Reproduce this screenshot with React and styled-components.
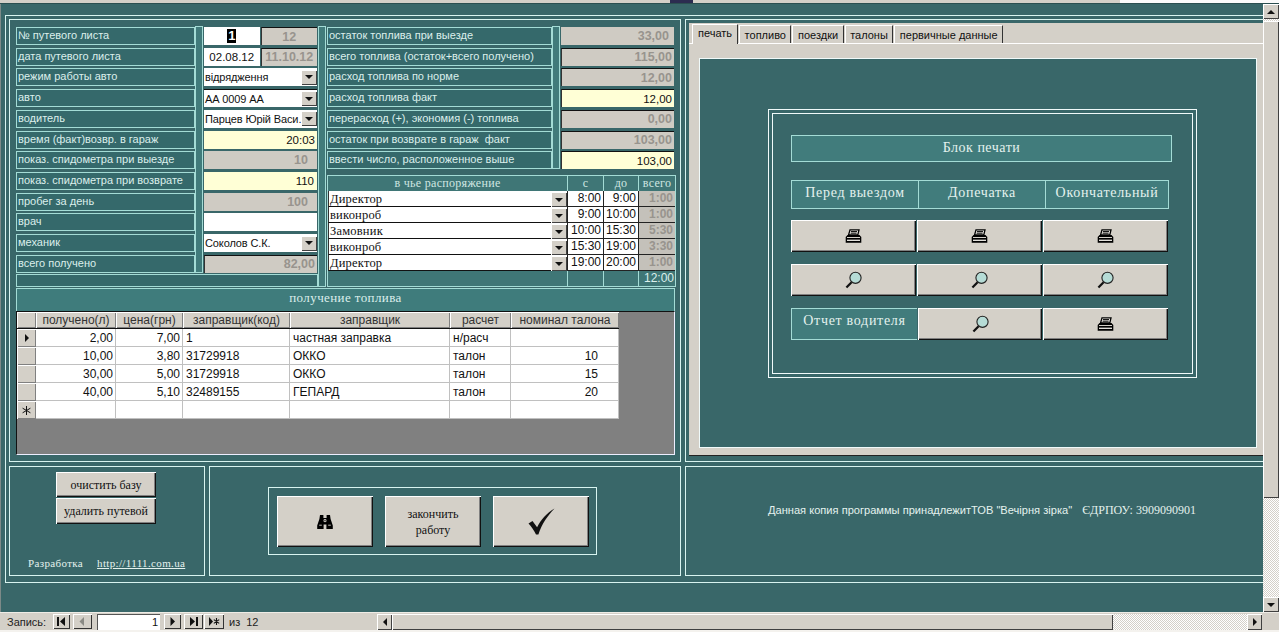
import React from 'react';
import styled, { createGlobalStyle } from 'styled-components';

const GlobalStyle = createGlobalStyle`
    html, body { margin: 0; padding: 0; background: #396769; }
    * { box-sizing: border-box; }
`;

const sans = '"Liberation Sans", Arial, sans-serif';
const serif = '"Liberation Serif", "Times New Roman", serif';
const FACE = '#d4d0c8';
const LINE = '#d8f4f0';
const SOFT = '#a4dcd6';

const Page = styled.div`
    width: 1279px;
    height: 632px;
    overflow: hidden;
    display: flex;
    flex-direction: column;
    background: #396769;
    font-family: ${sans};
`;

const TopStrip = styled.div`
    height: 4px;
    flex: none;
    display: grid;
    grid-template-columns: 670px 23px 427px 1fr;
    border-bottom: 1px solid #2b4f50;
`;

const StripPiece = styled.div`
    background: ${(p) => p.$color};
`;

const Middle = styled.div`
    flex: 1;
    min-height: 0;
    display: flex;
`;

const Content = styled.div`
    width: 1263px;
    border-left: 1px solid #7d8a88;
    padding: 11px 0 0 4px;
`;

const OuterFrame = styled.div`
    height: 568px;
    border: 1px solid ${LINE};
    border-right: none;
    padding: 3px 0 4px 3px;
    display: flex;
    flex-direction: column;
    gap: 4px;
`;

const PanelRow = styled.div`
    display: flex;
    gap: 4px;
    height: ${(p) => p.$height}px;
    flex: none;
`;

const Panel = styled.div`
    width: ${(p) => (p.$width ? `${p.$width}px` : 'auto')};
    flex: ${(p) => (p.$width ? 'none' : '1')};
    min-width: 0;
    border: 1px solid ${LINE};
    border-right: ${(p) => (p.$open ? 'none' : `1px solid ${LINE}`)};
`;

const FormPanel = styled(Panel)`
    padding: 6px 5px 0 6px;
`;

const FormArea = styled.div`
    height: 261px;
    display: flex;
`;

const LeftBlock = styled.div`
    width: 302px;
    flex: none;
    display: flex;
    flex-direction: column;
`;

const BlockColumns = styled.div`
    display: flex;
`;

const RowStack = styled.div`
    width: ${(p) => p.$width}px;
    flex: none;
    display: flex;
    flex-direction: column;
    gap: 2.72px;
    padding-top: 1px;
`;

const Label = styled.div`
    height: 18px;
    border: 1px solid ${SOFT};
    background: #35696b;
    color: #dcefec;
    font-size: 11px;
    line-height: 15px;
    padding-left: 1px;
    white-space: pre;
    overflow: hidden;
`;

const Gutter = styled.div`
    width: ${(p) => p.$width || 8}px;
    flex: none;
    border: 1px solid ${SOFT};
    background: #417b7b;
    margin-right: 1px;
`;

const Strip = styled.div`
    height: 13px;
    margin-top: 1px;
    border: 1px solid ${SOFT};
    background: #35696b;
`;

const fieldTones = { white: '#ffffff', gray: '#cfcbc3', yellow: '#ffffd6' };

const Field = styled.div`
    height: 18px;
    flex: ${(p) => (p.$half ? 1 : 'none')};
    display: flex;
    align-items: center;
    justify-content: ${(p) => (p.$center ? 'center' : 'flex-end')};
    padding: 0 ${(p) => p.$pad || 2}px 0 2px;
    background: ${(p) => fieldTones[p.$tone || 'white']};
    color: ${(p) => (p.$tone === 'gray' ? '#98948e' : '#111')};
    font-size: ${(p) => (p.$tone === 'gray' ? 12.5 : 11.5)}px;
    font-weight: ${(p) => (p.$tone === 'gray' ? 'bold' : 'normal')};
    white-space: nowrap;
    border-top: ${(p) => (p.$sunken ? '1px solid #111' : 'none')};
    border-left: ${(p) => (p.$sunken ? '1px solid #333' : 'none')};
`;

const FieldPair = styled.div`
    display: flex;
    gap: 1px;
    height: 18px;
`;

const Selected = styled.span`
    background: #000;
    color: #fff;
    font-weight: bold;
    font-size: 13px;
    padding: 0 1px;
    line-height: 14px;
`;

const Combo = styled.div`
    height: 18px;
    display: flex;
    align-items: center;
    background: #fff;
    font-size: 11px;
    letter-spacing: -0.12px;
    color: #111;
    padding-left: 1px;
    border-top: ${(p) => (p.$sunken ? '1px solid #111' : 'none')};
    white-space: nowrap;
`;

const ComboText = styled.span`
    flex: 1;
    min-width: 0;
`;

const ComboButton = styled.span`
    width: 16px;
    height: 15px;
    flex: none;
    display: flex;
    align-items: center;
    justify-content: center;
    background: ${FACE};
    box-shadow: inset 1px 1px 0 #fff, inset -1px -1px 0 #404040;
`;

const RightBlock = styled.div`
    width: 349px;
    flex: none;
    display: flex;
    flex-direction: column;
    gap: 6px;
`;

const TripGrid = styled.div`
    display: grid;
    grid-template-columns: 239px 36px 35px 37px;
    grid-template-rows: 15px repeat(5, 16px) 15px;
    border: 1px solid ${SOFT};
    width: 349px;
    background: #3f7676;
`;

const TripHead = styled.div`
    font-family: ${serif};
    font-size: 12px;
    letter-spacing: 0.3px;
    color: #cfe6e2;
    text-align: center;
    line-height: 15px;
    border-left: ${(p) => (p.$first ? 'none' : `1px solid ${SOFT}`)};
`;

const TripCombo = styled.div`
    display: flex;
    background: #fff;
    border-bottom: 1px solid #111;
    border-left: 1px solid #333;
    font-family: ${serif};
    font-size: 12.5px;
    letter-spacing: 0.2px;
    color: #111;
    line-height: 14px;
    padding: 1px 0 0 1px;
`;

const TripTime = styled.div`
    background: ${(p) => (p.$gray ? '#c4c1ba' : '#fff')};
    color: ${(p) => (p.$gray ? '#98948e' : '#111')};
    font-weight: ${(p) => (p.$gray ? 'bold' : 'normal')};
    font-size: 12px;
    line-height: 15px;
    text-align: right;
    padding-right: 2px;
    border-left: 1px solid #222;
    border-bottom: 1px solid #222;
`;

const TripFoot = styled.div`
    border-left: ${(p) => (p.$first ? 'none' : `1px solid ${SOFT}`)};
    font-size: 12px;
    line-height: 14px;
    text-align: right;
    color: #dcefec;
    padding-right: 1px;
`;

const FuelHead = styled.div`
    margin-top: 1px;
    height: 23px;
    background: #3f7c7c;
    border: 1px solid ${SOFT};
    border-bottom: none;
    text-align: center;
    font-family: ${serif};
    font-size: 13px;
    letter-spacing: 0.4px;
    line-height: 18px;
    color: #dcefec;
`;

const Sheet = styled.div`
    height: 144px;
    background: #808080;
    border-top: 1px solid #111;
    border-left: 1px solid #111;
    border-bottom: 1px solid #eef;
    border-right: 1px solid #eef;
`;

const SheetRow = styled.div`
    display: grid;
    grid-template-columns: 19px 80px 67px 107px 160px 61px 108px;
    width: 602px;
    height: ${(p) => (p.$head ? 17 : 18)}px;
`;

const HeadCell = styled.div`
    background: ${FACE};
    color: #333;
    font-size: 12px;
    line-height: 16px;
    text-align: center;
    white-space: nowrap;
    box-shadow: inset 1px 1px 0 #fff, inset -1px -1px 0 #808080;
    border-bottom: 1px solid #111;
`;

const Selector = styled.div`
    background: ${FACE};
    display: flex;
    align-items: center;
    justify-content: center;
    box-shadow: inset 1px 1px 0 #fff, inset -1px -1px 0 #808080;
`;

const Cell = styled.div`
    background: #fff;
    color: #111;
    font-size: 12px;
    line-height: 18px;
    padding: 0 ${(p) => (p.$pad || 2)}px 0 3px;
    text-align: ${(p) => (p.$right ? 'right' : 'left')};
    border-right: 1px solid #c0c0c0;
    border-bottom: 1px solid #c0c0c0;
    white-space: nowrap;
    overflow: hidden;
`;

const TabPanel = styled(Panel)`
    padding: 3px 0 0 3px;
`;

const TabControl = styled.div`
    height: 433px;
    background: ${FACE};
    border-bottom: 1px solid #222;
    display: flex;
    flex-direction: column;
`;

const TabStrip = styled.div`
    height: 21px;
    flex: none;
    padding: 1px 0 0 3px;
    display: flex;
    align-items: flex-end;
    border-bottom: 1px solid #fff;
`;

const Tab = styled.div`
    height: ${(p) => (p.$active ? 20 : 18)}px;
    margin-bottom: ${(p) => (p.$active ? -1 : 0)}px;
    align-self: flex-end;
    padding: 0 ${(p) => (p.$active ? 5 : 4.5)}px;
    margin-right: 1px;
    background: ${FACE};
    font-size: 11px;
    line-height: ${(p) => (p.$active ? 17 : 18)}px;
    color: #111;
    border-top: 1px solid #fff;
    border-left: 1px solid #fff;
    border-right: 1px solid #333;
    white-space: nowrap;
`;

const TabBody = styled.div`
    flex: 1;
    padding: 14px 6px 7px 10px;
    display: flex;
`;

const PrintSheet = styled.div`
    flex: 1;
    background: #396769;
    border: 1px solid #f0fafa;
    padding: 50px 0 0 68px;
`;

const PrintFrame = styled.div`
    width: 429px;
    height: 269px;
    border: 1px solid #f0fafa;
    padding: 3px;
`;

const PrintInner = styled.div`
    height: 100%;
    border: 1px solid #f0fafa;
    padding: 21px 0 0 18px;
    display: flex;
    flex-direction: column;
`;

const PrintTitle = styled.div`
    width: 381px;
    height: 27px;
    background: #417c7c;
    border: 1px solid ${SOFT};
    color: #e4f2ee;
    font-family: ${serif};
    font-size: 14px;
    letter-spacing: 0.5px;
    line-height: 23px;
    text-align: center;
    margin-bottom: 18px;
`;

const PrintHeads = styled.div`
    display: grid;
    grid-template-columns: 126px 127px 123px;
    height: 29px;
    width: 378px;
    margin-bottom: 11px;
    background: #417c7c;
    border: 1px solid ${SOFT};
`;

const PrintHead = styled.div`
    color: #e4f2ee;
    font-family: ${serif};
    font-size: 14px;
    letter-spacing: 0.7px;
    line-height: 23px;
    text-align: center;
    white-space: nowrap;
    border-left: ${(p) => (p.$first ? 'none' : `1px solid ${SOFT}`)};
`;

const ButtonRow = styled.div`
    display: flex;
    gap: 1px;
    height: 32px;
    margin-bottom: 12px;
`;

const Button3d = styled.button`
    width: ${(p) => p.$width || 125}px;
    height: ${(p) => p.$height || 32}px;
    flex: none;
    padding: 0;
    margin: 0;
    border: none;
    background: ${FACE};
    box-shadow: inset 1px 1px 0 #fff, inset -1px -1px 0 #111, inset -2px -2px 0 #808080;
    font-family: ${serif};
    font-size: 12px;
    line-height: 16px;
    color: #111;
    display: flex;
    align-items: center;
    justify-content: center;
    text-align: center;
`;

const DriverLabel = styled.div`
    width: 126px;
    flex: none;
    height: 32px;
    background: #417c7c;
    border: 1px solid ${SOFT};
    border-right: none;
    color: #e4f2ee;
    font-family: ${serif};
    font-size: 14px;
    letter-spacing: 0.7px;
    line-height: 24px;
    text-align: center;
    white-space: nowrap;
`;

const ToolsPanel = styled(Panel)`
    padding: 5px 0 0 46px;
    display: flex;
    flex-direction: column;
`;

const ToolButtons = styled.div`
    display: flex;
    flex-direction: column;
    gap: 1px;
    flex: 1;
`;

const Credits = styled.div`
    display: flex;
    gap: 14px;
    margin: 0 0 6px -28px;
    font-family: ${serif};
    font-size: 11px;
    letter-spacing: 0.35px;
    color: #e4f2ee;
    white-space: nowrap;
`;

const SiteLink = styled.a`
    color: #e4f2ee;
    text-decoration: underline;
`;

const ActionsPanel = styled(Panel)`
    padding: 20px 0 0 58px;
`;

const ActionBox = styled.div`
    width: 329px;
    height: 68px;
    border: 1px solid ${LINE};
    padding: 8px;
    display: flex;
    gap: 12px;
`;

const OwnerPanel = styled(Panel)`
    display: flex;
    align-items: center;
    padding: 0 0 22px 82px;
    gap: 10px;
    color: #e4f2ee;
    white-space: nowrap;
`;

const OwnerText = styled.span`
    font-size: 11.1px;
`;

const OwnerCode = styled.span`
    font-family: ${serif};
    font-size: 12px;
`;

const VScroll = styled.div`
    width: 16px;
    flex: none;
    display: flex;
    flex-direction: column;
    background: repeating-conic-gradient(#d4d0c8 0 25%, #ffffff 0 50%) 0 0 / 2px 2px;
`;

const ScrollButton = styled.div`
    height: ${(p) => p.$height || 15}px;
    width: ${(p) => p.$width || 16}px;
    flex: none;
    background: ${FACE};
    display: flex;
    align-items: center;
    justify-content: center;
    box-shadow: inset 1px 1px 0 #fff, inset -1px -1px 0 #404040;
`;

const VThumb = styled.div`
    height: 477px;
    flex: none;
    margin-top: 2px;
    background: ${FACE};
    box-shadow: inset 1px 1px 0 #fff, inset -1px -1px 0 #404040;
`;

const VGap = styled.div`
    flex: 1;
`;

const BottomBar = styled.div`
    height: 20px;
    flex: none;
    background: ${FACE};
    border-bottom: 2px solid #f4f2ee;
    border-top: 1px solid #eeece6;
    display: flex;
    align-items: center;
    padding-left: 7px;
    font-size: 11px;
    color: #222;
`;

const RecordLabel = styled.span`
    width: 46px;
    flex: none;
`;

const NavButton = styled.div`
    width: ${(p) => p.$width || 17}px;
    height: 15px;
    flex: none;
    margin-right: ${(p) => p.$gap || 0}px;
    background: ${FACE};
    display: flex;
    align-items: center;
    justify-content: center;
    box-shadow: inset 1px 1px 0 #fff, inset -1px -1px 0 #333;
`;

const RecordInput = styled.div`
    width: 63px;
    height: 16px;
    flex: none;
    margin-right: 4px;
    background: #fff;
    border-top: 1px solid #555;
    border-left: 1px solid #555;
    text-align: right;
    padding-right: 2px;
    line-height: 15px;
    color: #111;
`;

const RecordCount = styled.span`
    width: 153px;
    flex: none;
    padding-left: 5px;
    word-spacing: 3px;
`;

const HScroll = styled.div`
    width: 885px;
    height: 16px;
    flex: none;
    display: flex;
    background: repeating-conic-gradient(#d4d0c8 0 25%, #ffffff 0 50%) 0 0 / 2px 2px;
`;

const HThumb = styled.div`
    width: 721px;
    flex: none;
    background: ${FACE};
    box-shadow: inset 1px 1px 0 #fff, inset -1px -1px 0 #404040;
`;

const Arrow = ({ dir = 'down', color = '#111' }) => {
    const points = {
        down: '0,0 8,0 4,4',
        up: '0,4 8,4 4,0',
        left: '4,0 4,8 0,4',
        right: '0,0 0,8 4,4',
    };
    const upright = dir === 'up' || dir === 'down';
    return (
        <svg width={upright ? 8 : 4} height={upright ? 4 : 8} viewBox={upright ? '0 0 8 4' : '0 0 4 8'}>
            <polygon points={points[dir]} fill={color} />
        </svg>
    );
};

const NavIcon = ({ kind, color = '#111' }) => (
    <svg width="11" height="9" viewBox="0 0 11 9">
        {kind === 'first' && <path d="M1 0h2v9H1zM9 0v9L4 4.5z" fill={color} />}
        {kind === 'prev' && <path d="M7 0v9L2.5 4.5z" fill={color} />}
        {kind === 'next' && <path d="M3.5 0v9L8 4.5z" fill={color} />}
        {kind === 'last' && <path d="M2 0v9l5-4.5zM8 0h2v9H8z" fill={color} />}
        {kind === 'new' && (
            <g>
                <path d="M0 0v9l4-4.5z" fill={color} />
                <path d="M7.5 1v7M4.8 2.6l5.4 3.8M10.2 2.6L4.8 6.4" stroke={color} strokeWidth="1.1" />
            </g>
        )}
    </svg>
);

const PrinterIcon = () => (
    <svg width="17" height="15" viewBox="0 0 17 15">
        <path d="M5 .8h9l-1.2 5H3.6z" fill="#efede7" stroke="#000" strokeWidth="1.3" />
        <path d="M6 2.6h6M5.6 4.2h6" stroke="#000" />
        <path d="M2.5 6h12L16.3 8v5.8H.7V8z" fill="#000" />
        <path d="M2 8.5h13" stroke="#d4d0c8" strokeWidth="1" />
        <path d="M2 11.3h13" stroke="#efede7" strokeWidth="1.3" />
    </svg>
);

const LensIcon = () => (
    <svg width="17" height="18" viewBox="0 0 17 18">
        <circle cx="10.5" cy="6.8" r="5.6" fill="#b6dcd6" stroke="#222" strokeWidth="1.1" />
        <path d="M6.6 11.2L1.4 16.6" stroke="#111" strokeWidth="2.2" />
    </svg>
);

const BinocularsIcon = () => (
    <svg width="16" height="14" viewBox="0 0 16 14">
        <path d="M3 0h3.4v3h3.2V0H13l.6 4 2.2 6.5V14H9.4V9.4H6.6V14H.2v-3.5L2.4 4z" fill="#000" />
        <path d="M7 4.6h2v2H7zM2.2 10.2h2.6M11.2 10.2h2.6" stroke="#d4d0c8" strokeWidth="0.9" fill="none" />
    </svg>
);

const CheckIcon = () => (
    <svg width="27" height="27" viewBox="0 0 27 27">
        <path d="M0.5 15.5l4-2.6 4.6 6.4C12.8 11.6 18.8 5 26.5 0.5 19.5 7.8 13.8 16 10.4 26.5H8C6 22.4 3.6 19 0.5 15.5z" fill="#111" />
    </svg>
);

const NavAsterisk = () => (
    <svg width="9" height="9" viewBox="0 0 9 9">
        <path d="M4.5 0v9M.6 2.2l7.8 4.6M8.4 2.2L.6 6.8" stroke="#111" strokeWidth="1" />
    </svg>
);

const leftLabels = [
    '№ путевого листа',
    'дата путевого листа',
    'режим работы авто',
    'авто',
    'водитель',
    'время (факт)возвр. в гараж',
    'показ. спидометра при выезде',
    'показ. спидометра при возврате',
    'пробег за день',
    'врач',
    'механик',
    'всего получено',
];

const fuelRows = [
    { label: 'остаток топлива при выезде', value: '33,00', tone: 'gray', pad: 5 },
    { label: 'всего топлива (остаток+всего получено)', value: '115,00', tone: 'gray', sunken: true },
    { label: 'расход топлива по норме', value: '12,00', tone: 'gray', sunken: true },
    { label: 'расход топлива факт', value: '12,00', tone: 'yellow', sunken: true },
    { label: 'перерасход (+), экономия (-) топлива', value: '0,00', tone: 'gray', sunken: true },
    { label: 'остаток при возврате в гараж  факт', value: '103,00', tone: 'gray', sunken: true },
    { label: 'ввести число, расположенное выше', value: '103,00', tone: 'yellow', sunken: true },
];

const trips = [
    ['Директор', '8:00', '9:00', '1:00'],
    ['виконроб', '9:00', '10:00', '1:00'],
    ['Замовник', '10:00', '15:30', '5:30'],
    ['виконроб', '15:30', '19:00', '3:30'],
    ['Директор', '19:00', '20:00', '1:00'],
];

const sheetHead = ['', 'получено(л)', 'цена(грн)', 'заправщик(код)', 'заправщик', 'расчет', 'номинал талона'];

const sheetRows = [
    ['2,00', '7,00', '1', 'частная заправка', 'н/расч', ''],
    ['10,00', '3,80', '31729918', 'ОККО', 'талон', '10'],
    ['30,00', '5,00', '31729918', 'ОККО', 'талон', '15'],
    ['40,00', '5,10', '32489155', 'ГЕПАРД', 'талон', '20'],
    ['', '', '', '', '', ''],
];

const tabs = ['печать', 'топливо', 'поездки', 'талоны', 'первичные данные'];

const ComboField = ({ text, sunken }) => (
    <Combo $sunken={sunken}>
        <ComboText>{text}</ComboText>
        <ComboButton>
            <Arrow />
        </ComboButton>
    </Combo>
);

const App = () => (
    <Page>
        <GlobalStyle />
        <TopStrip>
            <StripPiece $color={FACE} />
            <StripPiece $color="#2c2c50" />
            <StripPiece $color={FACE} />
            <StripPiece $color="#fbfbfb" />
        </TopStrip>
        <Middle>
            <Content>
                <OuterFrame>
                    <PanelRow $height={443}>
                        <FormPanel $width={672}>
                            <FormArea>
                                <LeftBlock>
                                    <BlockColumns>
                                        <RowStack $width={179}>
                                            {leftLabels.map((label) => (
                                                <Label key={label}>{label}</Label>
                                            ))}
                                        </RowStack>
                                        <Gutter />
                                        <RowStack $width={113}>
                                            <FieldPair>
                                                <Field $half $center>
                                                    <Selected>1</Selected>
                                                </Field>
                                                <Field $half $center $tone="gray" $sunken>12</Field>
                                            </FieldPair>
                                            <FieldPair>
                                                <Field $half $center>02.08.12</Field>
                                                <Field $half $center $tone="gray" $sunken>11.10.12</Field>
                                            </FieldPair>
                                            <ComboField text="відрядження" />
                                            <ComboField text="АА 0009 АА" sunken />
                                            <ComboField text="Парцев Юрій Васи." />
                                            <Field $tone="yellow">20:03</Field>
                                            <Field $tone="gray" $pad={9}>10</Field>
                                            <Field $tone="yellow" $pad={3}>110</Field>
                                            <Field $tone="gray" $pad={9}>100</Field>
                                            <Field />
                                            <ComboField text="Соколов С.К." />
                                            <Field $tone="gray" $sunken>82,00</Field>
                                        </RowStack>
                                    </BlockColumns>
                                    <Strip />
                                </LeftBlock>
                                <Gutter />
                                <RightBlock>
                                    <BlockColumns>
                                        <RowStack $width={225}>
                                            {fuelRows.map((row) => (
                                                <Label key={row.label}>{row.label}</Label>
                                            ))}
                                        </RowStack>
                                        <Gutter />
                                        <RowStack $width={113}>
                                            {fuelRows.map((row) => (
                                                <Field key={row.label} $tone={row.tone} $sunken={row.sunken} $pad={row.pad}>
                                                    {row.value}
                                                </Field>
                                            ))}
                                        </RowStack>
                                    </BlockColumns>
                                    <TripGrid>
                                        <TripHead $first>в чье распоряжение</TripHead>
                                        <TripHead>с</TripHead>
                                        <TripHead>до</TripHead>
                                        <TripHead>всего</TripHead>
                                        {trips.map((trip, i) => (
                                            <React.Fragment key={i}>
                                                <TripCombo>
                                                    <ComboText>{trip[0]}</ComboText>
                                                    <ComboButton>
                                                        <Arrow />
                                                    </ComboButton>
                                                </TripCombo>
                                                <TripTime>{trip[1]}</TripTime>
                                                <TripTime>{trip[2]}</TripTime>
                                                <TripTime $gray>{trip[3]}</TripTime>
                                            </React.Fragment>
                                        ))}
                                        <TripFoot $first />
                                        <TripFoot />
                                        <TripFoot />
                                        <TripFoot>12:00</TripFoot>
                                    </TripGrid>
                                </RightBlock>
                            </FormArea>
                            <FuelHead>получение топлива</FuelHead>
                            <Sheet>
                                <SheetRow $head>
                                    {sheetHead.map((title, i) => (
                                        <HeadCell key={i}>{title}</HeadCell>
                                    ))}
                                </SheetRow>
                                {sheetRows.map((row, i) => (
                                    <SheetRow key={i}>
                                        <Selector>
                                            {i === 0 && <Arrow dir="right" />}
                                            {i === 4 && <NavAsterisk />}
                                        </Selector>
                                        <Cell $right>{row[0]}</Cell>
                                        <Cell $right>{row[1]}</Cell>
                                        <Cell>{row[2]}</Cell>
                                        <Cell>{row[3]}</Cell>
                                        <Cell>{row[4]}</Cell>
                                        <Cell $right $pad={20}>{row[5]}</Cell>
                                    </SheetRow>
                                ))}
                            </Sheet>
                        </FormPanel>
                        <TabPanel $open>
                            <TabControl>
                                <TabStrip>
                                    {tabs.map((tab, i) => (
                                        <Tab key={tab} $active={i === 0}>{tab}</Tab>
                                    ))}
                                </TabStrip>
                                <TabBody>
                                    <PrintSheet>
                                        <PrintFrame>
                                            <PrintInner>
                                                <PrintTitle>Блок печати</PrintTitle>
                                                <PrintHeads>
                                                    <PrintHead $first>Перед выездом</PrintHead>
                                                    <PrintHead>Допечатка</PrintHead>
                                                    <PrintHead>Окончательный</PrintHead>
                                                </PrintHeads>
                                                <ButtonRow>
                                                    <Button3d><PrinterIcon /></Button3d>
                                                    <Button3d><PrinterIcon /></Button3d>
                                                    <Button3d><PrinterIcon /></Button3d>
                                                </ButtonRow>
                                                <ButtonRow>
                                                    <Button3d><LensIcon /></Button3d>
                                                    <Button3d><LensIcon /></Button3d>
                                                    <Button3d><LensIcon /></Button3d>
                                                </ButtonRow>
                                                <ButtonRow>
                                                    <DriverLabel>Отчет водителя</DriverLabel>
                                                    <Button3d $width={124}><LensIcon /></Button3d>
                                                    <Button3d><PrinterIcon /></Button3d>
                                                </ButtonRow>
                                            </PrintInner>
                                        </PrintFrame>
                                    </PrintSheet>
                                </TabBody>
                            </TabControl>
                        </TabPanel>
                    </PanelRow>
                    <PanelRow $height={110}>
                        <ToolsPanel $width={196}>
                            <ToolButtons>
                                <Button3d $width={100} $height={25}>очистить базу</Button3d>
                                <Button3d $width={100} $height={26}>удалить путевой</Button3d>
                            </ToolButtons>
                            <Credits>
                                <span>Разработка</span>
                                <SiteLink href="#">http://1111.com.ua</SiteLink>
                            </Credits>
                        </ToolsPanel>
                        <ActionsPanel $width={472}>
                            <ActionBox>
                                <Button3d $width={96} $height={51}><BinocularsIcon /></Button3d>
                                <Button3d $width={96} $height={51}>закончить<br />работу</Button3d>
                                <Button3d $width={96} $height={51}><CheckIcon /></Button3d>
                            </ActionBox>
                        </ActionsPanel>
                        <OwnerPanel $open>
                            <OwnerText>Данная копия программы принадлежитТОВ "Вечірня зірка"</OwnerText>
                            <OwnerCode>ЄДРПОУ: 3909090901</OwnerCode>
                        </OwnerPanel>
                    </PanelRow>
                </OuterFrame>
            </Content>
            <VScroll>
                <ScrollButton>
                    <Arrow dir="up" />
                </ScrollButton>
                <VThumb />
                <VGap />
                <ScrollButton>
                    <Arrow />
                </ScrollButton>
            </VScroll>
        </Middle>
        <BottomBar>
            <RecordLabel>Запись:</RecordLabel>
            <NavButton $gap={3}><NavIcon kind="first" /></NavButton>
            <NavButton $width={19} $gap={5}><NavIcon kind="prev" color="#8a8a84" /></NavButton>
            <RecordInput>1</RecordInput>
            <NavButton $gap={3}><NavIcon kind="next" /></NavButton>
            <NavButton $width={19} $gap={1}><NavIcon kind="last" /></NavButton>
            <NavButton $width={20}><NavIcon kind="new" /></NavButton>
            <RecordCount>из 12</RecordCount>
            <HScroll>
                <ScrollButton $width={15} $height={16}>
                    <Arrow dir="left" />
                </ScrollButton>
                <HThumb />
                <VGap />
                <ScrollButton $width={15} $height={16}>
                    <Arrow dir="right" />
                </ScrollButton>
            </HScroll>
        </BottomBar>
    </Page>
);

export default App;
